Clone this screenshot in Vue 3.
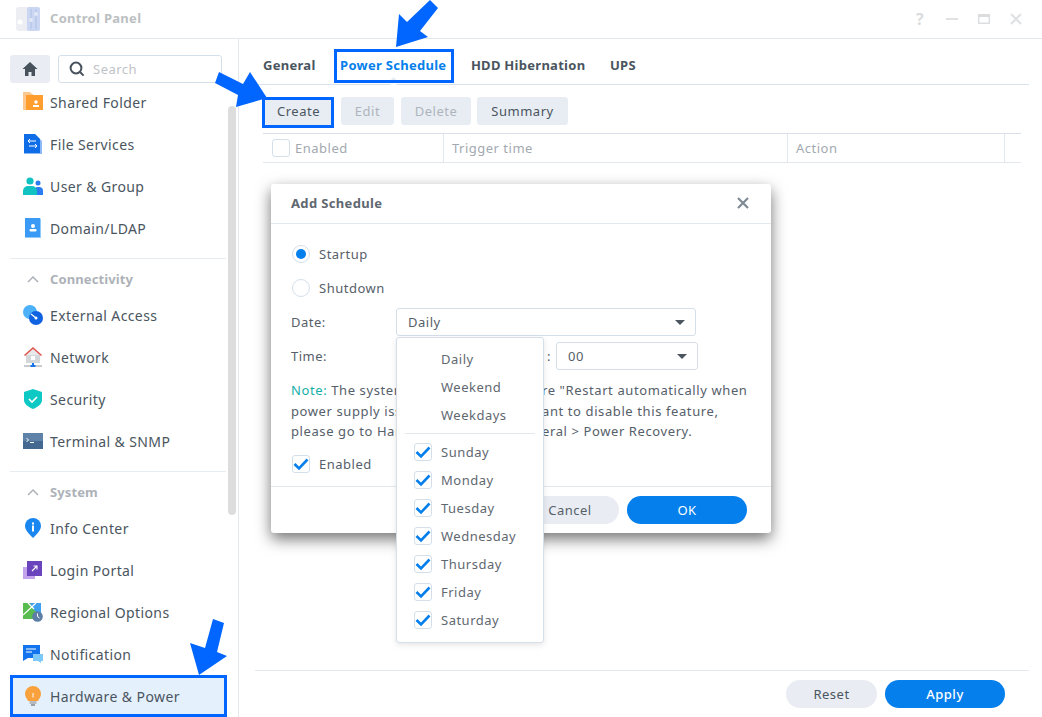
<template>
  <div class="window">
    <header class="titlebar">
      <svg class="app-icon" width="26" height="26" viewBox="0 0 26 26">
        <rect x="1" y="1" width="24" height="24" rx="3" fill="#e6e9f0" />
        <rect x="12" y="1" width="13" height="24" rx="2" fill="#b9c9ee" />
        <path d="M16 3v20M21 3v20" stroke="#93acd9" stroke-width="1" />
        <circle cx="16" cy="14" r="2" fill="#d8e2f5" />
        <circle cx="21" cy="8" r="2" fill="#d8e2f5" />
        <circle cx="5" cy="16" r="2.5" fill="#fff" />
      </svg>
      <span class="app-title">Control Panel</span>
      <div class="win-controls">
        <span class="win-help">?</span>
        <svg width="14" height="14" viewBox="0 0 14 14"><rect x="1" y="6" width="12" height="2" fill="#dfe1e3" /></svg>
        <svg width="14" height="14" viewBox="0 0 14 14"><rect x="1.7" y="2.7" width="10.6" height="8.6" fill="#fff" stroke="#dadcde" stroke-width="1.4" /><rect x="1" y="2" width="12" height="3" fill="#dadcde" /></svg>
        <svg width="14" height="14" viewBox="0 0 14 14"><path d="M2 2l10 10M12 2L2 12" stroke="#dfe1e3" stroke-width="2" /></svg>
      </div>
    </header>

    <div class="body">
      <aside class="sidebar">
        <div class="side-top">
          <button class="home-btn">
            <svg width="16" height="16" viewBox="0 0 16 16"><path d="M8 1L0.5 8H3v7h3.5v-4h3v4H13V8h2.5z" fill="#47525c" /></svg>
          </button>
          <div class="search-box">
            <svg width="16" height="16" viewBox="0 0 16 16" fill="none" stroke="#47525c" stroke-width="2"><circle cx="7" cy="7" r="5.4" /><path d="M11 11l3.6 3.6" /></svg>
            <span>Search</span>
          </div>
        </div>
        <div class="side-list">
          <div class="side-inner">
            <template v-for="group in groups" :key="group.title">
              <template v-if="group.title">
                <div class="divider"></div>
                <div class="group-title">
                  <svg width="12" height="8" viewBox="0 0 12 8" fill="none" stroke="#a8adb3" stroke-width="1.4"><path d="M1 7l5-5 5 5" /></svg>
                  <span>{{ group.title }}</span>
                </div>
              </template>
              <div v-for="item in group.items" :key="item.name" class="nav-item" :class="{ active: item.active }">
                <svg v-if="item.icon === 'folder'" class="nav-icon" viewBox="0 0 20 20"><path d="M0 0h7l2 2h1v16H0z" fill="#fbc88f" /><path d="M3 3h17v15H3z" fill="#ff9d2e" /><circle cx="13" cy="10" r="1.8" fill="#fff" /><rect x="10" y="13" width="6" height="2" fill="#fff" /></svg>
                <svg v-else-if="item.icon === 'files'" class="nav-icon" viewBox="0 0 20 20"><path d="M1 0h11l7 7v13H1z" fill="#8db9f7" /><path d="M1 0h11l5 5v14H1z" fill="#0f6de8" /><path d="M5 7h8M5 7l2-2M5 7l2 2M14 12H6M14 12l-2-2M14 12l-2 2" stroke="#fff" stroke-width="1" fill="none" /></svg>
                <svg v-else-if="item.icon === 'users'" class="nav-icon" viewBox="0 0 20 20"><circle cx="15" cy="7" r="2.5" fill="#2b7cf0" /><path d="M11 19v-4a4 4 0 0 1 4-4h1a4 4 0 0 1 4 4v4z" fill="#2b7cf0" /><circle cx="7" cy="5" r="3.6" fill="#11c2c2" /><path d="M0 19v-4a5 5 0 0 1 5-5h4a5 5 0 0 1 5 5v4z" fill="#11c2c2" /></svg>
                <svg v-else-if="item.icon === 'domain'" class="nav-icon" viewBox="0 0 20 20"><path d="M2 0h15l1 1v19H2z" fill="#8fcbfb" /><path d="M2 0h15v19H2z" fill="#3a9af5" /><circle cx="10" cy="8" r="2" fill="#fff" /><rect x="6.5" y="11" width="7" height="2.5" rx="1" fill="#fff" /></svg>
                <svg v-else-if="item.icon === 'external'" class="nav-icon" viewBox="0 0 20 20"><circle cx="7" cy="7" r="7" fill="#4cb1f8" /><circle cx="13" cy="13" r="7" fill="#0f62e0" /><path d="M8 9l5 4" stroke="#fff" stroke-width="1.3" /><circle cx="13" cy="13" r="1.5" fill="#fff" /></svg>
                <svg v-else-if="item.icon === 'network'" class="nav-icon" viewBox="0 0 20 20"><path d="M3 8h14v8H3z" fill="#d4d7da" /><path d="M10 2l7 6H3z" fill="#e8e9ea" /><path d="M10 0L1 8l1 1 8-7 8 7 1-1z" fill="#e0524d" /><rect x="8" y="9" width="4" height="4" fill="#fff" /><rect x="1" y="18" width="18" height="2" fill="#c8ccd1" /><rect x="9" y="16" width="2" height="2" fill="#1a73e8" /><rect x="7.5" y="18" width="5" height="2" fill="#1a73e8" /></svg>
                <svg v-else-if="item.icon === 'security'" class="nav-icon" viewBox="0 0 20 20"><path d="M10 0l9 3v8c0 4-4 7-9 9-5-2-9-5-9-9V3z" fill="#0ec9c3" /><path d="M6 10l3 3 5-5" stroke="#fff" stroke-width="1.6" fill="none" /></svg>
                <svg v-else-if="item.icon === 'terminal'" class="nav-icon" viewBox="0 0 20 20"><rect x="0" y="2" width="20" height="16" fill="#44688f" /><rect x="0" y="2" width="20" height="8" fill="#5e82a8" /><path d="M3.5 7l2 2-2 2" stroke="#fff" stroke-width="1" fill="none" /><path d="M7 11.5h4" stroke="#fff" stroke-width="1" /></svg>
                <svg v-else-if="item.icon === 'info'" class="nav-icon" viewBox="0 0 20 20"><path d="M10 0a8 8 0 0 1 8 8c0 4-4 8-8 12-4-4-8-8-8-12a8 8 0 0 1 8-8z" fill="#1a86f0" /><rect x="9" y="7.5" width="2" height="6" fill="#fff" /><rect x="9" y="4.5" width="2" height="2" fill="#fff" /></svg>
                <svg v-else-if="item.icon === 'login'" class="nav-icon" viewBox="0 0 20 20"><rect x="0" y="7" width="12" height="12" fill="#c3a4ec" /><rect x="4" y="1" width="15" height="15" fill="#6a44bd" /><path d="M9 11l5-5M10.5 6H14v3.5" stroke="#fff" stroke-width="1.1" fill="none" /></svg>
                <svg v-else-if="item.icon === 'regional'" class="nav-icon" viewBox="0 0 20 20"><rect x="0" y="1" width="18" height="16" fill="#58bd4e" /><path d="M7 1h11v13L10 7z" fill="#3fa0f0" /><path d="M0 13L13 1M5 1l6 6" stroke="#fff" stroke-width="1.2" /><circle cx="14.5" cy="14.5" r="5.3" fill="#5d7fa6" /><path d="M14.5 11.5v3l2 1.5" stroke="#fff" stroke-width="1" fill="none" /></svg>
                <svg v-else-if="item.icon === 'notify'" class="nav-icon" viewBox="0 0 20 20"><path d="M0 1h17v13H5l-5 3z" fill="#1374ee" /><path d="M3 5h10M3 8h6" stroke="#fff" stroke-width="1.2" /><path d="M10 10h10v7h-2v2l-3-2h-5z" fill="#7cc8f9" /></svg>
                <svg v-else-if="item.icon === 'power'" class="nav-icon" viewBox="0 0 20 20"><path d="M10 0a8 8 0 0 1 8 8c0 3-2 4.5-3 7H5c-1-2.5-3-4-3-7a8 8 0 0 1 8-8z" fill="#f9a13c" /><rect x="6.5" y="15" width="7" height="3" fill="#b7bcc2" /><rect x="8" y="18" width="4" height="2" fill="#9aa1a8" /><path d="M9.5 7h1v4.5h-1z" fill="#fff" /></svg>
                <span>{{ item.name }}</span>
              </div>
            </template>
          </div>
        </div>
        <div class="scroll-thumb"></div>
      </aside>

      <main class="main">
        <nav class="tabs">
          <span v-for="tab in tabs" :key="tab" class="tab" :class="{ active: tab === 'Power Schedule' }">{{ tab }}</span>
        </nav>
        <div class="toolbar">
          <button class="tool-btn create">Create</button>
          <button class="tool-btn edit" disabled>Edit</button>
          <button class="tool-btn delete" disabled>Delete</button>
          <button class="tool-btn summary">Summary</button>
        </div>
        <div class="table-head">
          <div class="col col-enabled"><span class="check"></span>Enabled</div>
          <div class="col col-trigger">Trigger time</div>
          <div class="col col-action">Action</div>
          <div class="col col-rest"></div>
        </div>
        <div class="spacer"></div>
        <footer class="main-footer">
          <button class="pill reset">Reset</button>
          <button class="pill apply">Apply</button>
        </footer>
      </main>
    </div>

    <section class="dialog">
      <div class="dialog-head">
        <span>Add Schedule</span>
        <svg width="12" height="12" viewBox="0 0 12 12"><path d="M1 1l10 10M11 1L1 11" stroke="#7f8a94" stroke-width="2.2" /></svg>
      </div>
      <div class="dialog-body">
        <label class="option first"><span class="radio on"></span>Startup</label>
        <label class="option second"><span class="radio"></span>Shutdown</label>
        <div class="form-row">
          <span class="form-label">Date:</span>
          <div class="select date-select">Daily<i class="caret"></i></div>
        </div>
        <div class="form-row time-row">
          <span class="form-label">Time:</span>
          <span class="colon">:</span>
          <div class="select minute-select">00<i class="caret"></i></div>
        </div>
        <div class="note">
          <div class="note-line"><span class="note-left"><em>Note:</em> The system will start as scheduled. Please ensu</span><span>re "Restart automatically when</span></div>
          <div class="note-line"><span class="note-left">power supply issue is fixed" is enabled. If you w</span><span>ant to disable this feature,</span></div>
          <div class="note-line"><span class="note-left">please go to Hardware &amp; Power > Gen</span><span>eral > Power Recovery.</span></div>
        </div>
        <label class="option enabled"><span class="check on"><svg width="16" height="16" viewBox="0 0 16 16"><path d="M1.5 8l4.5 4.5 8.5-9" fill="none" stroke="#057feb" stroke-width="2.6" /></svg></span>Enabled</label>
      </div>
      <div class="dialog-foot">
        <button class="pill cancel">Cancel</button>
        <button class="pill ok">OK</button>
      </div>
    </section>

    <div class="dropdown">
      <div v-for="opt in dateOptions" :key="opt" class="drop-item"><span>{{ opt }}</span></div>
      <div class="drop-sep"></div>
      <div v-for="day in days" :key="day" class="drop-item">
        <span class="check on"><svg width="16" height="16" viewBox="0 0 16 16"><path d="M1.5 8l4.5 4.5 8.5-9" fill="none" stroke="#057feb" stroke-width="2.6" /></svg></span>
        <span>{{ day }}</span>
      </div>
    </div>

    <!-- annotations drawn over the screenshot -->
    <div class="mark mark-tab"></div>
    <div class="mark mark-create"></div>
    <div class="mark mark-side"></div>
    <svg class="arrows" width="1042" height="717" viewBox="0 0 1042 717">
      <polygon points="396,47 399,14 407,22 430,0 438,8 420,31 428,37" fill="#0066ff" />
      <polygon points="215,83 219,72 243,84 250,72 267,98 236,107 238,95" fill="#0066ff" />
      <polygon points="213,619 224,623 217,652 227,656 199,675 190,643 205,648" fill="#0066ff" />
    </svg>
  </div>
</template>

<script setup>
const groups = [
  {
    title: '',
    items: [
      { name: 'Shared Folder', icon: 'folder' },
      { name: 'File Services', icon: 'files' },
      { name: 'User & Group', icon: 'users' },
      { name: 'Domain/LDAP', icon: 'domain' }
    ]
  },
  {
    title: 'Connectivity',
    items: [
      { name: 'External Access', icon: 'external' },
      { name: 'Network', icon: 'network' },
      { name: 'Security', icon: 'security' },
      { name: 'Terminal & SNMP', icon: 'terminal' }
    ]
  },
  {
    title: 'System',
    items: [
      { name: 'Info Center', icon: 'info' },
      { name: 'Login Portal', icon: 'login' },
      { name: 'Regional Options', icon: 'regional' },
      { name: 'Notification', icon: 'notify' },
      { name: 'Hardware & Power', icon: 'power', active: true }
    ]
  }
]

const tabs = ['General', 'Power Schedule', 'HDD Hibernation', 'UPS']
const dateOptions = ['Daily', 'Weekend', 'Weekdays']
const days = ['Sunday', 'Monday', 'Tuesday', 'Wednesday', 'Thursday', 'Friday', 'Saturday']
</script>

<style>
html, body {
  margin: 0;
  background: #fff;
  overflow: hidden;
}
</style>

<style scoped>
.window {
  position: relative;
  width: 1042px;
  height: 717px;
  overflow: hidden;
  display: flex;
  flex-direction: column;
  background: #fff;
  color: #4a5560;
  font-family: "Noto Sans", sans-serif;
  font-size: 13px;
  letter-spacing: 0.5px;
}

button {
  font: inherit;
  letter-spacing: inherit;
  border: none;
  padding: 0;
}

.titlebar {
  height: 38px;
  flex-shrink: 0;
  display: flex;
  align-items: center;
  padding: 0 19px 0 15px;
  border-bottom: 1px solid #e3e8ee;
}

.app-icon {
  opacity: 0.75;
}

.app-title {
  margin: 0 0 3px 9px;
  font-weight: 700;
  letter-spacing: 0.3px;
  color: #bcbfc2;
}

.win-controls {
  margin-left: auto;
  display: flex;
  align-items: center;
  gap: 18px;
}

.win-help {
  width: 14px;
  text-align: center;
  color: #dadcde;
  font-size: 16px;
  font-weight: 700;
}

.body {
  flex: 1;
  min-height: 0;
  display: flex;
}

.sidebar {
  position: relative;
  width: 238px;
  flex-shrink: 0;
  display: flex;
  flex-direction: column;
  border-right: 1px solid #e3e8ee;
}

.side-top {
  display: flex;
  gap: 8px;
  padding: 16px 16px 0 10px;
  height: 29px;
  flex-shrink: 0;
}

.home-btn {
  width: 40px;
  height: 28px;
  background: #e9edf3;
  border-radius: 3px;
  display: flex;
  align-items: center;
  justify-content: center;
}

.search-box {
  flex: 1;
  height: 26px;
  border: 1px solid #d5dfea;
  border-radius: 3px;
  display: flex;
  align-items: center;
  gap: 8px;
  padding-left: 10px;
  color: #bfc3c7;
}

.side-list {
  flex: 1;
  min-height: 0;
  overflow: hidden;
  padding: 0 12px 0 10px;
}

.side-inner {
  margin-top: -3px;
}

.nav-item {
  height: 42px;
  display: flex;
  align-items: center;
  gap: 7px;
  padding-left: 13px;
  font-size: 14px;
  letter-spacing: 0.4px;
}

.nav-item.active {
  background: #e4f0fc;
}

.nav-icon {
  width: 20px;
  height: 20px;
  flex-shrink: 0;
}

.divider {
  height: 1px;
  margin-top: 9px;
  background: #e8edf2;
}

.group-title {
  height: 31px;
  padding-top: 4px;
  display: flex;
  align-items: center;
  gap: 11px;
  padding-left: 17px;
  font-weight: 700;
  letter-spacing: 0.1px;
  color: #adb2b8;
}

.scroll-thumb {
  position: absolute;
  left: 228px;
  top: 67px;
  width: 8px;
  height: 409px;
  border-radius: 4px;
  background: #dddddd;
}

.main {
  flex: 1;
  min-width: 0;
  display: flex;
  flex-direction: column;
  padding: 0 13px 0 16px;
}

.tabs {
  height: 39px;
  padding: 6px 0 0 8px;
  flex-shrink: 0;
  display: flex;
  align-items: center;
  gap: 24.5px;
  border-bottom: 1px solid #d9e2ec;
  font-weight: 700;
  letter-spacing: 0.28px;
}

.tab {
  position: relative;
}

.tab.active {
  color: #057feb;
}

.tab.active::after {
  content: "";
  position: absolute;
  left: 50%;
  bottom: -12px;
  width: 6px;
  height: 6px;
  margin-left: -3px;
  background: #fff;
  border-left: 1px solid #d9e2ec;
  border-top: 1px solid #d9e2ec;
  transform: rotate(45deg);
}

.toolbar {
  display: flex;
  margin: 12px 0 0 10px;
}

.tool-btn {
  height: 28px;
  border-radius: 3px;
  background: #e8edf4;
  color: #4a5560;
}

.tool-btn:disabled {
  color: #aeb4bb;
}

.tool-btn.create {
  width: 67px;
  margin-right: 9px;
}

.tool-btn.edit {
  width: 53px;
  margin-right: 7px;
}

.tool-btn.delete {
  width: 70px;
  margin-right: 6px;
}

.tool-btn.summary {
  width: 91px;
}

.table-head {
  display: flex;
  height: 28px;
  margin: 8px 8px 0;
  border-top: 1px solid #d9e2ec;
  border-bottom: 1px solid #e3e8ee;
  color: #a3a9b0;
}

.col {
  display: flex;
  align-items: center;
  padding-left: 8px;
  border-right: 1px solid #e3e8ee;
  box-sizing: border-box;
}

.col-enabled {
  width: 181px;
  padding-left: 9px;
}

.col-trigger {
  width: 344px;
}

.col-action {
  width: 217px;
}

.col-rest {
  flex: 1;
  border-right: none;
}

.check {
  width: 16px;
  height: 16px;
  flex-shrink: 0;
  border: 1px solid #d5dfea;
  border-radius: 3px;
  background: #fff;
  display: inline-flex;
  margin-right: 5px;
}

.spacer {
  flex: 1;
}

.main-footer {
  height: 37px;
  flex-shrink: 0;
  display: flex;
  justify-content: flex-end;
  gap: 8px;
  padding: 9px 24px 0 0;
  border-top: 1px solid #e3e8ee;
}

.pill {
  height: 28px;
  border-radius: 14px;
}

.reset {
  width: 91px;
  background: #e9edf3;
  color: #4a5560;
}

.apply {
  width: 120px;
  background: #057feb;
  color: #fff;
  font-weight: 500;
}

.dialog {
  position: absolute;
  left: 271px;
  top: 184px;
  width: 500px;
  height: 349px;
  background: #fff;
  border-radius: 3px;
  box-shadow: 0 6px 15px rgba(0, 0, 0, 0.55);
  display: flex;
  flex-direction: column;
}

.dialog-head {
  height: 40px;
  box-sizing: border-box;
  flex-shrink: 0;
  display: flex;
  align-items: center;
  justify-content: space-between;
  padding: 0 22px 2px 20px;
  border-bottom: 1px solid #e3e8ee;
  font-weight: 700;
  letter-spacing: 0.35px;
  color: #5f6870;
}

.dialog-body {
  flex: 1;
  padding: 0 20px;
  color: #56606a;
}

.option {
  display: flex;
  align-items: center;
  height: 18px;
}

.option.first {
  margin-top: 21px;
}

.option.second {
  margin-top: 16px;
}

.radio {
  width: 16px;
  height: 16px;
  margin: 0 9px 0 1px;
  border: 1px solid #d5dfea;
  border-radius: 50%;
  box-sizing: content-box;
  display: inline-flex;
  align-items: center;
  justify-content: center;
}

.radio.on::after {
  content: "";
  width: 10px;
  height: 10px;
  border-radius: 50%;
  background: #057feb;
}

.form-row {
  display: flex;
  align-items: center;
  height: 28px;
  margin-top: 11px;
}

.form-row.time-row {
  margin-top: 6px;
}

.form-label {
  width: 105px;
}

.select {
  position: relative;
  box-sizing: border-box;
  height: 28px;
  border: 1px solid #d5dfea;
  border-radius: 3px;
  padding-left: 11px;
  display: flex;
  align-items: center;
}

.date-select {
  width: 300px;
}

.minute-select {
  width: 142px;
}

.colon {
  margin-left: 151px;
  width: 9px;
}

.caret {
  position: absolute;
  right: 10px;
  top: 11px;
  border-left: 5px solid transparent;
  border-right: 5px solid transparent;
  border-top: 5px solid #4a5560;
}

.note {
  margin-top: 10px;
  line-height: 20.5px;
  letter-spacing: 0.6px;
}

.note-line {
  display: flex;
  white-space: nowrap;
}

.note-left {
  width: 251px;
  overflow: hidden;
}

.note em {
  font-style: normal;
  color: #12b0a8;
}

.option.enabled {
  margin-top: 13px;
}

.option.enabled .check {
  margin: 0 9px 0 1px;
  align-items: center;
  justify-content: center;
}

.dialog-foot {
  flex-shrink: 0;
  display: flex;
  justify-content: flex-end;
  gap: 8px;
  padding: 9px 24px 0 0;
  box-sizing: border-box;
  height: 47px;
  border-top: 1px solid #e3e8ee;
}

.cancel {
  width: 98px;
  background: #e9edf3;
  color: #56606a;
}

.ok {
  width: 120px;
  background: #057feb;
  color: #fff;
}

.dropdown {
  position: absolute;
  left: 396px;
  top: 337px;
  width: 148px;
  height: 306px;
  box-sizing: border-box;
  background: #fff;
  border: 1px solid #d5dfea;
  border-radius: 3px;
  box-shadow: 0 2px 6px rgba(0, 0, 0, 0.1);
  padding-top: 7px;
  color: #5f6870;
}

.drop-item {
  height: 28px;
  display: flex;
  align-items: center;
  padding-left: 44px;
}

.drop-item .check {
  margin-left: -27px;
  margin-right: 9px;
  align-items: center;
  justify-content: center;
}

.drop-sep {
  height: 1px;
  margin: 4px 8px 4px;
  background: #e3e8ee;
}

.mark {
  position: absolute;
  box-sizing: border-box;
  border: 3px solid #0066ff;
  pointer-events: none;
}

.mark-tab {
  left: 334px;
  top: 49px;
  width: 120px;
  height: 34px;
}

.mark-create {
  left: 262px;
  top: 97px;
  width: 72px;
  height: 31px;
}

.mark-side {
  left: 10px;
  top: 675px;
  width: 217px;
  height: 42px;
}

.arrows {
  position: absolute;
  left: 0;
  top: 0;
  pointer-events: none;
}
</style>
